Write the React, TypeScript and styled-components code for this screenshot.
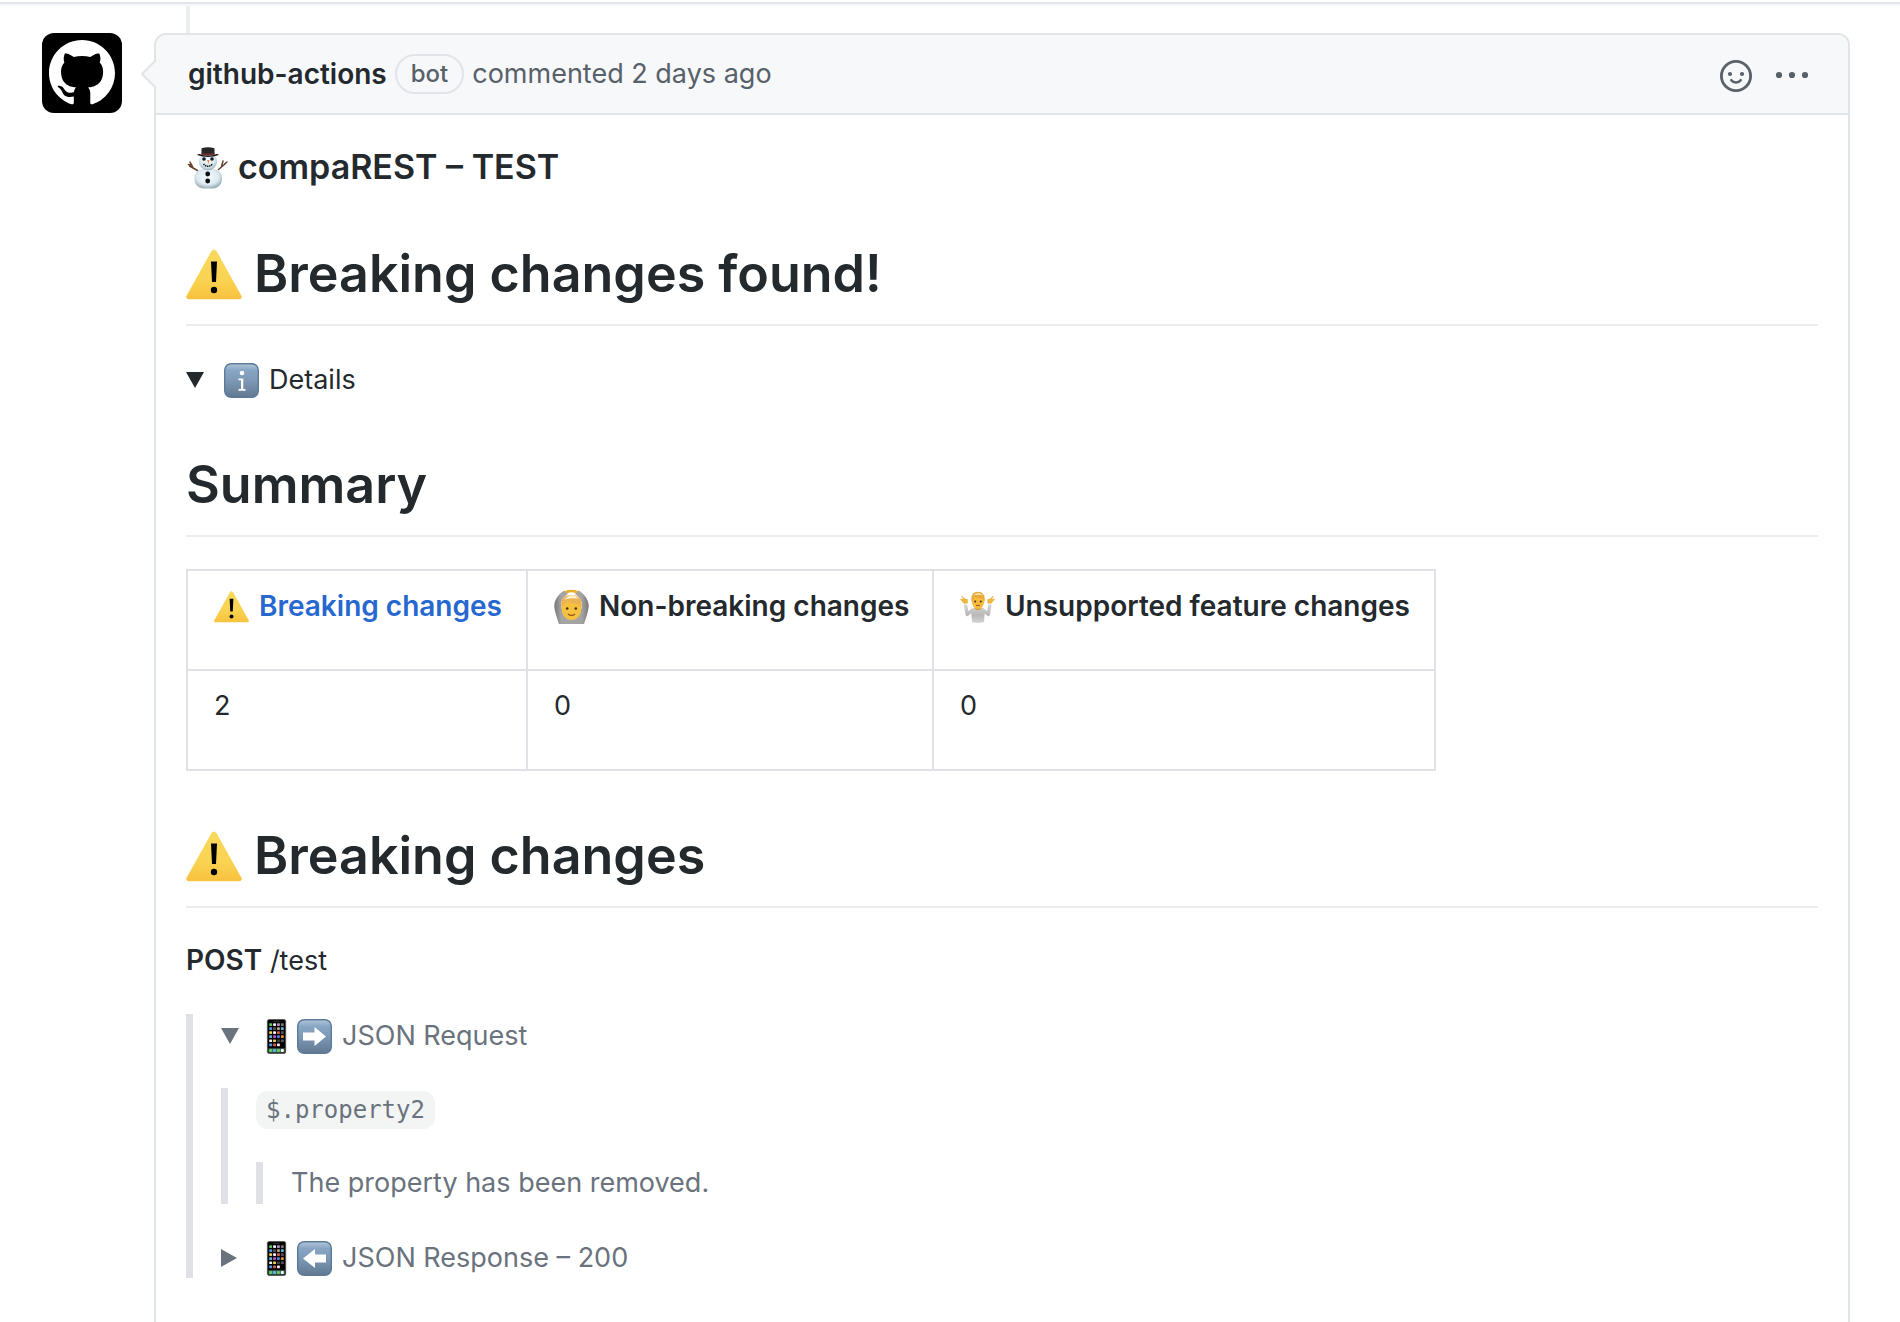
import React from "react";
import styled, { createGlobalStyle, css } from "styled-components";

const ink = "#24292e";
const muted = "#586069";
const quote = "#6a737d";
const line = "#e1e4e8";
const rule = "#e0e1e6";

const GlobalStyle = createGlobalStyle`
  *, *::before, *::after { box-sizing: border-box; }
  body {
    margin: 0;
    background: #fff;
    color: ${ink};
    font-family: Inter, "Liberation Sans", sans-serif;
    font-size: 27px;
    line-height: 42px;
  }
`;

const Page = styled.div`
  display: flex;
  flex-direction: column;
  min-height: 100vh;
`;

const TopRule = styled.div`
  height: 6px;
  flex: none;
  border-top: 2px solid #fff;
  border-bottom: 2px solid #f6f7f8;
  background: ${line};
`;

const TimelineItem = styled.article`
  flex: 1;
  display: flex;
  gap: 32px;
  padding: 0 50px 0 42px;
`;

const Avatar = styled.a`
  display: grid;
  place-items: center;
  flex: none;
  width: 80px;
  height: 80px;
  margin-top: 27px;
  border-radius: 12px;
  background: #000;
`;

const Column = styled.div`
  flex: 1;
  min-width: 0;
  display: flex;
  flex-direction: column;
`;

const TimelineLine = styled.div`
  flex: none;
  width: 4px;
  height: 27px;
  margin-left: 32px;
  background: #ebedef;
`;

const Card = styled.section`
  flex: 1;
  border: 2px solid ${line};
  border-bottom: 0;
  border-radius: 12px 12px 0 0;
`;

const CardHeader = styled.header`
  position: relative;
  display: flex;
  align-items: center;
  gap: 8px;
  height: 80px;
  padding: 0 38px 0 32px;
  border-bottom: 2px solid ${line};
  border-radius: 10px 10px 0 0;
  background: #f6f8fa;
  color: ${muted};
`;

const Caret = styled.svg`
  position: absolute;
  left: -16px;
  top: 24px;
`;

const Author = styled.a`
  color: ${ink};
  font-size: 28px;
  font-weight: 600;
  text-decoration: none;
`;

const Badge = styled.span`
  height: 40px;
  padding: 0 14px;
  border: 2px solid ${line};
  border-radius: 20px;
  font-size: 24px;
  font-weight: 500;
  line-height: 36px;
`;

const HeaderActions = styled.div`
  display: flex;
  align-items: center;
  gap: 22px;
  margin-left: auto;
  padding-top: 4px;
`;

const IconButton = styled.button`
  display: flex;
  padding: 0;
  border: 0;
  background: none;
  color: ${muted};
  cursor: pointer;
`;

const Body = styled.div`
  padding: 30px;
`;

const headingBase = css`
  display: flex;
  align-items: center;
  font-weight: 600;
`;

const Title = styled.h3`
  ${headingBase}
  gap: 9px;
  margin: 0;
  font-size: 34px;
  line-height: 44px;
`;

const Heading = styled.h1`
  ${headingBase}
  gap: 12px;
  margin: 48px 0 32px;
  padding-bottom: 13px;
  border-bottom: 2px solid #eaecef;
  font-size: 52px;
  line-height: 74px;
`;

const Disclosure = styled.details`
  & + & {
    margin-top: 32px;
  }
`;

const Summary = styled.summary`
  display: flex;
  align-items: center;
  padding-top: 2px;
  line-height: 40px;
  list-style: none;
  cursor: pointer;

  &::-webkit-details-marker {
    display: none;
  }

  &::before {
    content: "";
    width: 16px;
    height: 18px;
    margin-right: 22px;
    background: currentColor;
    clip-path: polygon(0 0, 100% 50%, 0 100%);
  }

  details[open] > &::before {
    width: 18px;
    height: 16px;
    margin-right: 20px;
    clip-path: polygon(0 0, 100% 0, 50% 100%);
  }
`;

const Icons = styled.span`
  display: inline-flex;
  gap: 3px;
  margin-right: 10px;
`;

const Table = styled.table`
  border-collapse: collapse;
  table-layout: fixed;
`;

const Col = styled.col<{ $width: number }>`
  width: ${(p) => p.$width}px;
`;

const cell = css`
  padding: 14px 16px 10px 26px;
  border: 2px solid ${rule};
  text-align: left;
  white-space: nowrap;
`;

const Th = styled.th`
  ${cell}
  font-size: 28px;
  font-weight: 600;
`;

const Td = styled.td`
  ${cell}
`;

const CellText = styled.p`
  display: flex;
  align-items: center;
  margin: 0 0 32px;
`;

const Link = styled.a`
  color: #2667d0;
  text-decoration: none;
`;

const Paragraph = styled.p`
  margin: 0;
`;

const Strong = styled.strong`
  font-size: 28px;
  font-weight: 600;
  line-height: 28px;
`;

const Quote = styled.blockquote`
  margin: 32px 0 0;
  padding: 0 28px;
  border-left: 7px solid ${rule};
  color: ${quote};
`;

const Code = styled.code`
  padding: 5px 10px;
  border-radius: 12px;
  background: #f3f4f4;
  font-family: "DejaVu Sans Mono", "Liberation Mono", monospace;
  font-size: 24px;
  line-height: 28px;
`;

function Octocat() {
  return (
    <svg width="66" height="66" viewBox="0 0 16 16" fill="#fff" aria-hidden="true">
      <path d="M8 0C3.58 0 0 3.58 0 8c0 3.54 2.29 6.53 5.47 7.59.4.07.55-.17.55-.38 0-.19-.01-.82-.01-1.49-2.01.37-2.53-.49-2.69-.94-.09-.23-.48-.94-.82-1.13-.28-.15-.68-.52-.01-.53.63-.01 1.08.58 1.23.82.72 1.21 1.87.87 2.33.66.07-.52.28-.87.51-1.07-1.78-.2-3.64-.89-3.64-3.95 0-.87.31-1.59.82-2.15-.08-.2-.36-1.02.08-2.12 0 0 .67-.21 2.2.82.64-.18 1.32-.27 2-.27.68 0 1.36.09 2 .27 1.53-1.04 2.2-.82 2.2-.82.44 1.1.16 1.92.08 2.12.51.56.82 1.27.82 2.15 0 3.07-1.87 3.75-3.65 3.95.29.25.54.73.54 1.48 0 1.07-.01 1.93-.01 2.2 0 .21.15.46.55.38A8.013 8.013 0 0016 8c0-4.42-3.58-8-8-8z" />
    </svg>
  );
}

function Smiley() {
  return (
    <svg width="32" height="32" viewBox="0 0 32 32" fill="none" stroke="currentColor" aria-hidden="true">
      <circle cx="16" cy="16" r="14.6" strokeWidth="2.8" />
      <circle cx="10" cy="14" r="2.1" fill="currentColor" stroke="none" />
      <circle cx="22" cy="14" r="2.1" fill="currentColor" stroke="none" />
      <path d="M11.3 20.2c2.4 3 7 3 9.4 0" strokeWidth="2.6" strokeLinecap="round" />
    </svg>
  );
}

function Kebab() {
  return (
    <svg width="36" height="32" viewBox="0 0 36 32" fill="currentColor" aria-hidden="true">
      <circle cx="5" cy="15" r="3.1" />
      <circle cx="18" cy="15" r="3.1" />
      <circle cx="31" cy="15" r="3.1" />
    </svg>
  );
}

function Warning({ size = 35 }: { size?: number }) {
  return (
    <svg width={size} height={size} viewBox="0 0 56 56" role="img" aria-label="Warning">
      <defs>
        <linearGradient id="warn" x1="0" y1="0" x2="0" y2="1">
          <stop offset="0" stopColor="#f8d95c" />
          <stop offset=".6" stopColor="#fad352" />
          <stop offset="1" stopColor="#f8c23e" />
        </linearGradient>
      </defs>
      <path d="M25.4 5.2c1.2-2 4-2 5.200 0L55.300 49.500c1.100 2 .1 3.800-2.200 3.800H2.900C.6 53.300-.4 51.500.7 49.500z" fill="url(#warn)" />
      <path d="M25 15.500h6l-1 20.500h-4z" fill="#000" />
      <circle cx="28" cy="44" r="3.200" fill="#000" />
    </svg>
  );
}

function Tile({ label, children }: { label: string; children: React.ReactNode }) {
  return (
    <svg width="35" height="35" viewBox="0 0 35 35" role="img" aria-label={label}>
      <defs>
        <linearGradient id="tile" x1="0" y1="0" x2="0" y2="1">
          <stop offset="0" stopColor="#b4c6d9" />
          <stop offset=".2" stopColor="#88a5c4" />
          <stop offset=".5" stopColor="#7d99b7" />
          <stop offset="1" stopColor="#627890" />
        </linearGradient>
      </defs>
      <rect x=".7" y=".7" width="33.600" height="33.600" rx="6.500" fill="url(#tile)" stroke="#5d7a9b" strokeWidth="1.400" />
      {children}
    </svg>
  );
}

function Info() {
  return (
    <Tile label="Information">
      <circle cx="18" cy="10" r="2.300" fill="#fff" />
      <path d="M14.500 15.500h4.800V26h2.200v1.800h-7V26h2.500v-8.700h-2.500z" fill="#fff" />
    </Tile>
  );
}

function Arrow({ left = false }: { left?: boolean }) {
  return (
    <Tile label={left ? "Left arrow" : "Right arrow"}>
      <path
        d={left ? "M6 17.500 18 8v5.500h11v8H18V27z" : "M29 17.500 17.500 8v5.500H6v8h11.500V27z"}
        fill="#fff"
      />
    </Tile>
  );
}

const appColors = [
  ["#5fc45c", "#ececec", "#b48ad0", "#777"],
  ["#4a9be8", "#555", "#b8a184", "#58b8d8"],
  ["#f2cf5b", "#f0f0f0", "#dd5a4f", "#555"],
  ["#58b8d8", "#c44fc6", "#4a80e8", "#f08a2c"],
  ["#eee", "#e8d050", "#444", "#555"],
  ["#4a9be8", "#dd5a4f", "#eee", "#000"],
];

function Phone() {
  return (
    <svg width="35" height="35" viewBox="0 0 35 35" role="img" aria-label="Mobile phone">
      <rect x="8.400" y=".4" width="18.300" height="34.200" rx="2" fill="#050505" stroke="#4d4d4d" strokeWidth=".8" />
      <rect x="14.500" y="1.800" width="6" height="1" rx=".5" fill="#333" />
      {appColors.map((row, y) =>
        row.map((color, x) => (
          <rect key={`${x}-${y}`} x={10.2 + x * 3.9} y={4.2 + y * 4.05} width="2.900" height="2.700" rx=".7" fill={color} />
        ))
      )}
      <rect x="9.400" y="29.300" width="16.300" height="4.300" fill="#456b5a" />
      {["#62cc60", "#5ab8e0", "#62cc60", "#f4f4f4"].map((color, x) => (
        <rect key={x} x={10.2 + x * 3.9} y="30" width="2.900" height="2.900" rx=".7" fill={color} />
      ))}
    </svg>
  );
}

function Snowman() {
  return (
    <svg width="43" height="44" viewBox="0 0 43 44" role="img" aria-label="Snowman">
      <defs>
        <radialGradient id="snow" cx=".48" cy=".4" r=".62">
          <stop offset="0" stopColor="#f4fafd" />
          <stop offset=".65" stopColor="#dce9f0" />
          <stop offset="1" stopColor="#91a7b4" />
        </radialGradient>
      </defs>
      <g transform="translate(1 1)">
        <g stroke="#64412f" strokeWidth="1.500" strokeLinecap="round" fill="none">
          <path d="M10.500 24.500 2.500 20M6.300 22 3 16M4.800 19 1.500 18.500" />
          <path d="M31.500 23.500 38 18M34.500 20.500 36 15M37 18.500 40 16" />
        </g>
        <rect x="7.500" y="23" width="27.500" height="19.500" rx="9" fill="url(#snow)" />
        <circle cx="21" cy="15.500" r="9" fill="url(#snow)" />
        <path d="M14.500 2.300Q21 0 27.500 2.300V8.500h-13z" fill="#272727" />
        <path d="M14.500 6.700Q21 8.500 27.500 6.700V9Q21 10.500 14.500 9z" fill="#70302e" />
        <path d="M10 9Q12 7.300 14.500 8.800 21 10.500 27.500 8.800 30.500 7.300 32 9 21 13 10 9z" fill="#171717" />
        <circle cx="17" cy="13" r="1.800" fill="#101820" />
        <circle cx="25" cy="13" r="1.800" fill="#101820" />
        <path d="M20 14h2.300l-.6 4z" fill="#ef7d3e" />
        <path d="M16.500 17.800c2 3.200 7 3.200 9 0" fill="none" stroke="#172026" strokeWidth="1.600" strokeDasharray="1.500 .6" />
        <circle cx="20.700" cy="28" r="2.400" fill="#0c0f12" />
        <circle cx="20.700" cy="35" r="2.400" fill="#0c0f12" />
      </g>
    </svg>
  );
}

function OkPerson() {
  return (
    <svg width="35" height="35" viewBox="0 0 35 35" role="img" aria-label="Person gesturing OK">
      <defs>
        <linearGradient id="sleeve" x1="0" x2="1">
          <stop offset="0" stopColor="#777" />
          <stop offset=".2" stopColor="#a4a4a4" />
          <stop offset=".8" stopColor="#a4a4a4" />
          <stop offset="1" stopColor="#777" />
        </linearGradient>
      </defs>
      <path d="M5 35C3 29 .2 21 .3 16 .6 10 6 3.500 10.500 1.500L14 5C9 8 7 12 7 17l3 10h15l3-10c0-5-2-9-7-12l3.500-3.500C29 3.500 34.400 10 34.700 16c.1 5-2.700 13-4.700 19z" fill="url(#sleeve)" />
      <path d="M10.500 2.500Q14 .2 17.500 1 21 .2 24.500 2.500L22 4.500q-4.500-2.600-9 0z" fill="#e9ad2d" />
      <ellipse cx="17.500" cy="20" rx="9.800" ry="11" fill="#f6c13e" />
      <path d="M7.400 19C6 9.500 11 6 17.500 6S29.200 10 27.600 19L25 15c-6 0-10-1-12-3.500-1 3-3 3.500-5.600 7.500z" fill="#ebb354" />
      <path d="M10.500 10.500Q17.500 2.500 24.500 9.500q-6-1-14 1z" fill="#fff1ca" />
      <circle cx="13.200" cy="19.500" r="1.300" fill="#493015" />
      <circle cx="21.800" cy="19.500" r="1.300" fill="#493015" />
      <path d="M14 25c2 1.800 5 1.800 7 0" fill="none" stroke="#965a20" strokeWidth="1.400" />
    </svg>
  );
}

function ShrugPerson() {
  return (
    <svg width="35" height="35" viewBox="0 0 35 35" role="img" aria-label="Person shrugging">
      <defs>
        <linearGradient id="shirt" gradientUnits="userSpaceOnUse" x1="0" y1="14" x2="0" y2="34">
          <stop offset="0" stopColor="#dcdcdc" />
          <stop offset=".6" stopColor="#b8b8b8" />
          <stop offset="1" stopColor="#d4d4d4" />
        </linearGradient>
      </defs>
      <path d="M5.500 15.500 7.200 25.500 13 20.500M30 15.500 28.300 25.500 22.500 20.500" fill="none" stroke="url(#shirt)" strokeWidth="3.400" strokeLinejoin="round" />
      <path d="M11 21Q13 18 18 18t7 3L24 33q-6 2-12 0z" fill="url(#shirt)" />
      <g fill="#efb83b" stroke="#df9c2a" strokeWidth=".4">
        <path d="M4 14.500.4 10l3.200.6L1.400 7 5 10l2.400.3.200 3.700z" />
        <path d="m31 14.500 3.700-4.500-3.200.6L33.500 7 30 10l-2.200.3-.2 3.700z" />
      </g>
      <path d="M15 18h6v2q-3 2-6 0z" fill="#d59328" />
      <ellipse cx="18" cy="12.500" rx="6.200" ry="7.500" fill="#f5bd3b" />
      <path d="M11.700 13C10.200 5.500 14 2.800 18 2.800s8 3 6.500 10.200L22.500 9q-5 .7-8-1z" fill="#e6a83d" />
      <path d="M13 6.500Q18 1.500 23.500 6.500 18 5 13 6.500z" fill="#ffe8ad" />
      <circle cx="15.200" cy="12.500" r="1" fill="#49301a" />
      <circle cx="20.800" cy="12.500" r="1" fill="#49301a" />
      <path d="M16 16.800q2-1.300 4 0" fill="none" stroke="#8c5520" strokeWidth="1" />
    </svg>
  );
}

export default function App() {
  return (
    <>
      <GlobalStyle />
      <Page>
        <TopRule />
        <TimelineItem>
          <Avatar href="#author" aria-label="github-actions">
            <Octocat />
          </Avatar>
          <Column>
            <TimelineLine />
            <Card>
              <CardHeader>
                <Caret width="17" height="30" viewBox="0 0 17 30" aria-hidden="true">
                  <path d="M17 0 2 15l15 15z" fill="#f6f8fa" />
                  <path d="M16 1 2 15l14 14" fill="none" stroke={line} strokeWidth="2" />
                </Caret>
                <Author href="#author">github-actions</Author>
                <Badge>bot</Badge>
                <span>commented 2 days ago</span>
                <HeaderActions>
                  <IconButton type="button" aria-label="Add reaction">
                    <Smiley />
                  </IconButton>
                  <IconButton type="button" aria-label="Show options">
                    <Kebab />
                  </IconButton>
                </HeaderActions>
              </CardHeader>
              <Body>
                <Title>
                  <Snowman />
                  compaREST – TEST
                </Title>
                <Heading>
                  <Warning size={56} />
                  Breaking changes found!
                </Heading>
                <Disclosure open>
                  <Summary>
                    <Icons>
                      <Info />
                    </Icons>
                    Details
                  </Summary>
                  <Heading>Summary</Heading>
                  <Table>
                    <colgroup>
                      <Col $width={340} />
                      <Col $width={406} />
                      <Col $width={502} />
                    </colgroup>
                    <thead>
                      <tr>
                        <Th scope="col">
                          <CellText>
                            <Icons>
                              <Warning />
                            </Icons>
                            <Link href="#breaking-changes">Breaking changes</Link>
                          </CellText>
                        </Th>
                        <Th scope="col">
                          <CellText>
                            <Icons>
                              <OkPerson />
                            </Icons>
                            Non-breaking changes
                          </CellText>
                        </Th>
                        <Th scope="col">
                          <CellText>
                            <Icons>
                              <ShrugPerson />
                            </Icons>
                            Unsupported feature changes
                          </CellText>
                        </Th>
                      </tr>
                    </thead>
                    <tbody>
                      <tr>
                        <Td>
                          <CellText>2</CellText>
                        </Td>
                        <Td>
                          <CellText>0</CellText>
                        </Td>
                        <Td>
                          <CellText>0</CellText>
                        </Td>
                      </tr>
                    </tbody>
                  </Table>
                  <Heading id="breaking-changes">
                    <Warning size={56} />
                    Breaking changes
                  </Heading>
                  <Paragraph>
                    <Strong>POST</Strong> /test
                  </Paragraph>
                  <Quote>
                    <Disclosure open>
                      <Summary>
                        <Icons>
                          <Phone />
                          <Arrow />
                        </Icons>
                        JSON Request
                      </Summary>
                      <Quote>
                        <Paragraph>
                          <Code>$.property2</Code>
                        </Paragraph>
                        <Quote>
                          <Paragraph>The property has been removed.</Paragraph>
                        </Quote>
                      </Quote>
                    </Disclosure>
                    <Disclosure>
                      <Summary>
                        <Icons>
                          <Phone />
                          <Arrow left />
                        </Icons>
                        JSON Response – 200
                      </Summary>
                    </Disclosure>
                  </Quote>
                </Disclosure>
              </Body>
            </Card>
          </Column>
        </TimelineItem>
      </Page>
    </>
  );
}
